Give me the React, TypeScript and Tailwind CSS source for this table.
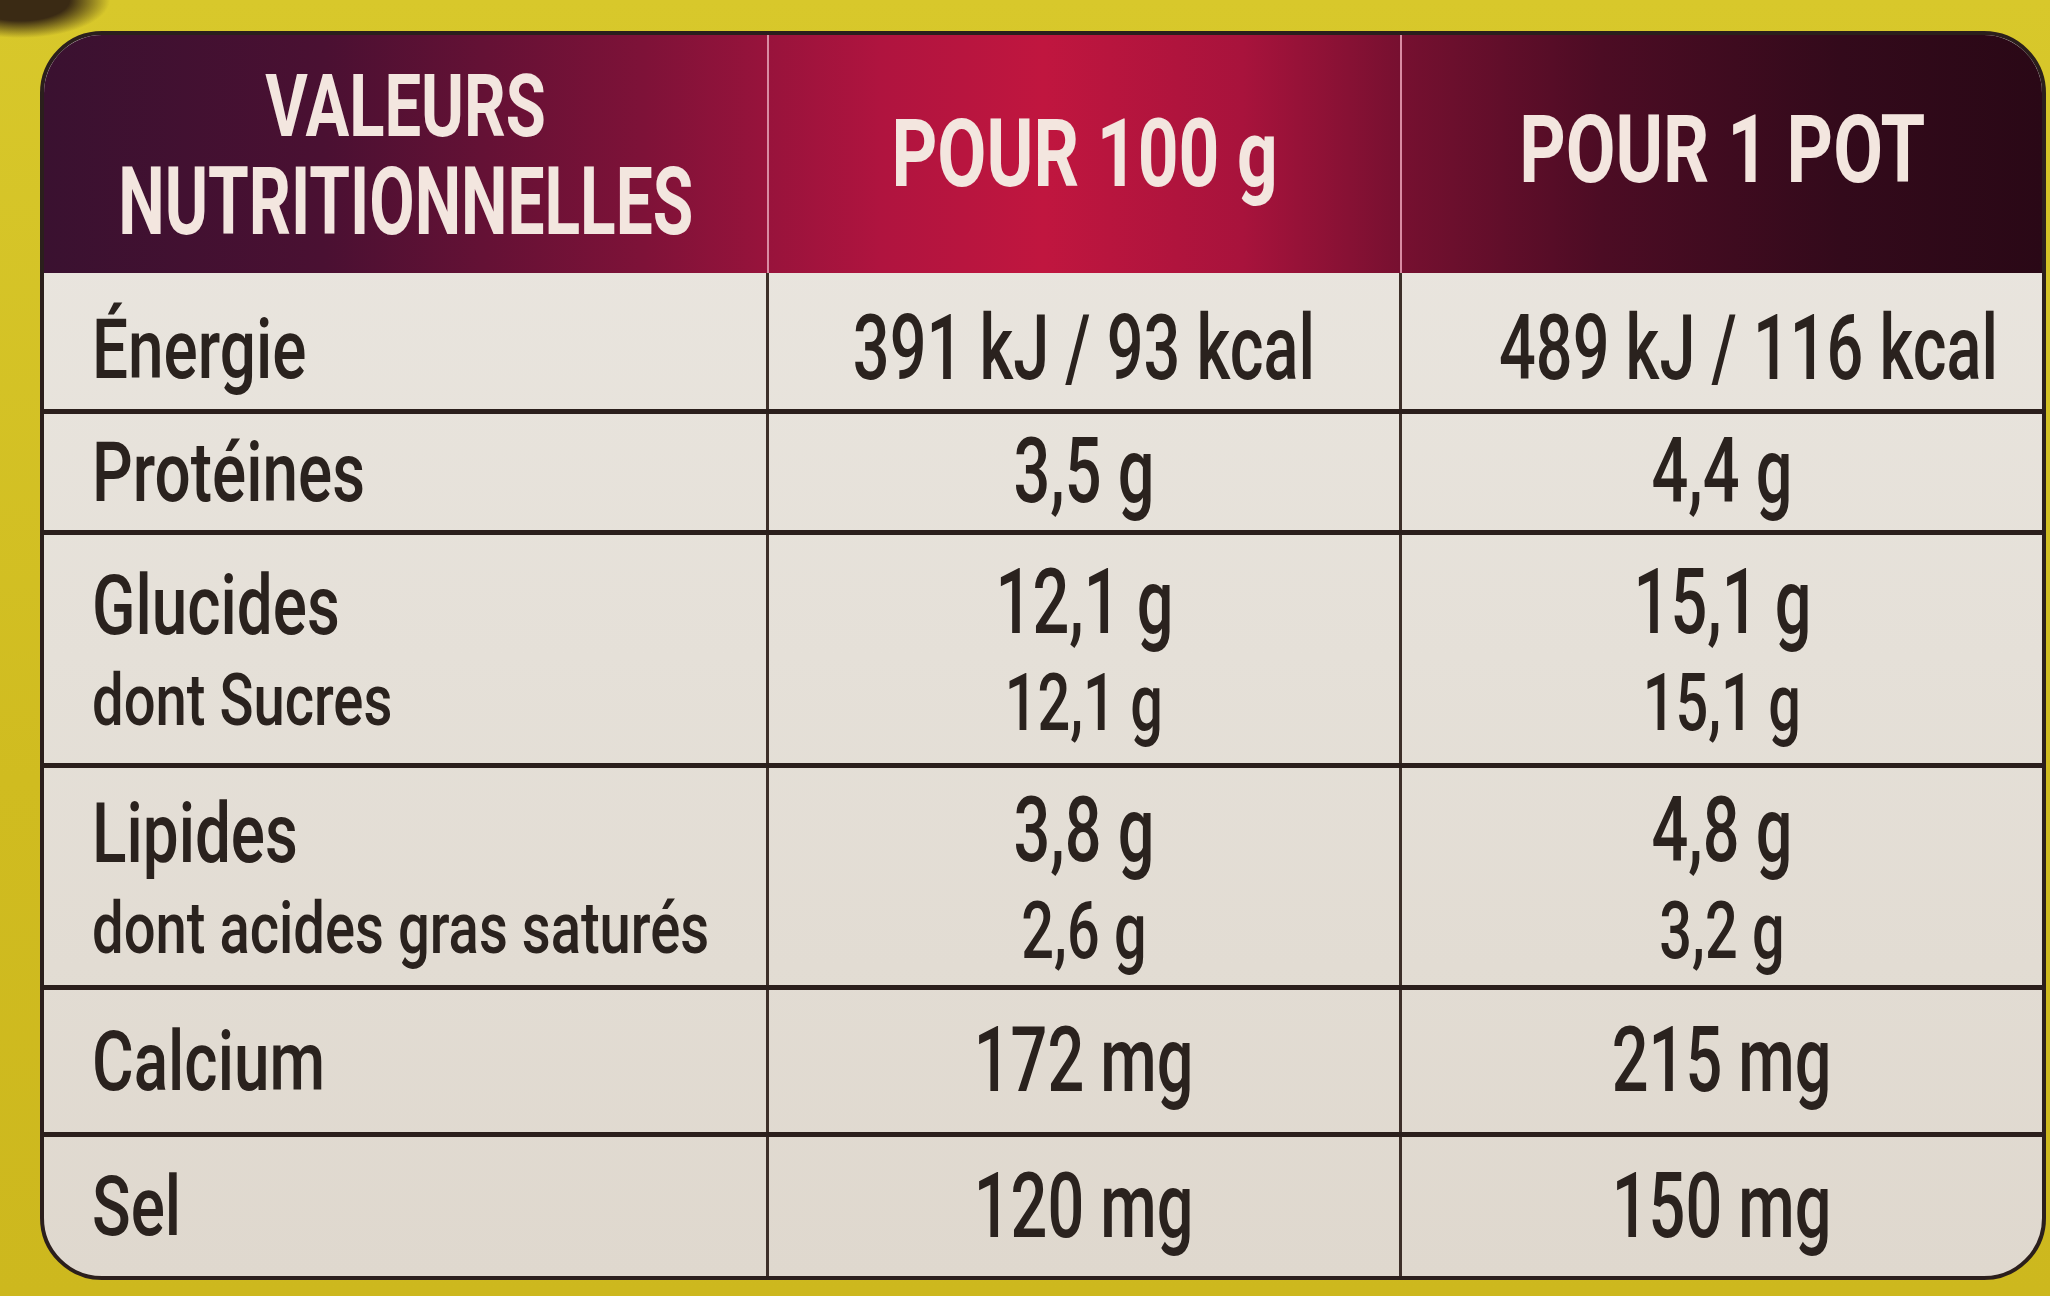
import React from "react";

type Row = {
  label: string[];
  per100: string[];
  perPot: string[];
  height: string;
  shift?: string;
};

const rows: Row[] = [
  { label: ["Énergie"], per100: ["391 kJ / 93 kcal"], perPot: ["489 kJ / 116 kcal"], height: "h-[141px]", shift: "pt-[16px]" },
  { label: ["Protéines"], per100: ["3,5 g"], perPot: ["4,4 g"], height: "h-[121px]" },
  { label: ["Glucides", "dont Sucres"], per100: ["12,1 g", "12,1 g"], perPot: ["15,1 g", "15,1 g"], height: "h-[233px]", shift: "pt-[8px]" },
  { label: ["Lipides", "dont acides gras saturés"], per100: ["3,8 g", "2,6 g"], perPot: ["4,8 g", "3,2 g"], height: "h-[222px]", shift: "pt-[8px]" },
  { label: ["Calcium"], per100: ["172 mg"], perPot: ["215 mg"], height: "h-[147px]" },
  { label: ["Sel"], per100: ["120 mg"], perPot: ["150 mg"], height: "h-[139px]" },
];

function Label({ lines }: { lines: string[] }) {
  return (
    <>
      {lines.map((t, i) => (
        <span
          key={t}
          className={
            i === 0
              ? "block origin-left scale-x-[0.76] whitespace-nowrap text-[84px] leading-[95px]"
              : "block origin-left scale-x-[0.78] whitespace-nowrap text-[72px] leading-[95px]"
          }
        >
          {t}
        </span>
      ))}
    </>
  );
}

function Values({ lines }: { lines: string[] }) {
  return (
    <>
      {lines.map((t, i) => (
        <span
          key={i}
          className={
            i === 0
              ? "inline-block scale-x-[0.72] whitespace-nowrap text-[90px] leading-[100px]"
              : "inline-block scale-x-[0.72] whitespace-nowrap text-[80px] leading-[100px]"
          }
        >
          {t}
        </span>
      ))}
    </>
  );
}

export default function App() {
  return (
    <div className="w-[2050px] h-[1296px] overflow-hidden pt-[31px] pl-[40px] bg-[radial-gradient(ellipse_90px_38px_at_20px_0px,#3a2a14_55%,transparent_100%),linear-gradient(180deg,#d8c82b_0%,#d0bc20_60%,#cdb81e_100%)] font-['Roboto','Liberation_Sans',sans-serif]">
      <div className="w-[2006px] h-[1249px] rounded-[62px] border-4 border-[#2b1f1c] overflow-hidden bg-[linear-gradient(180deg,#ebe7e1_0%,#e5e0d8_50%,#dfd8ce_100%)] text-[#2a221e] font-medium">
        {/* header */}
        <div className="grid grid-cols-[725px_633px_1fr] h-[238px] text-[#f3e6df] font-bold bg-[linear-gradient(90deg,#3a1130_0%,#4a1032_14%,#7e1238_30%,#b0143f_42%,#c0163f_50%,#a8133c_60%,#761030_68%,#4c0c24_78%,#330a1b_90%,#2a0816_100%)]">
          <div className="flex flex-col items-center justify-center border-r-2 border-[#d98ca3]">
            <span className="inline-block scale-x-[0.74] whitespace-nowrap text-[88px] leading-[97px]">VALEURS</span>
            <span className="inline-block scale-x-[0.7] whitespace-nowrap text-[94px] leading-[97px]">NUTRITIONNELLES</span>
          </div>
          <div className="flex items-center justify-center border-r-2 border-[#d98ca3]">
            <span className="inline-block scale-x-[0.75] whitespace-nowrap text-[95px] leading-[100px]">POUR 100 g</span>
          </div>
          <div className="flex items-center justify-center pb-[8px]">
            <span className="inline-block scale-x-[0.76] whitespace-nowrap text-[95px] leading-[100px]">POUR 1 POT</span>
          </div>
        </div>

        {/* body */}
        {rows.map((r, idx) => (
          <div
            key={r.label[0]}
            className={`grid grid-cols-[725px_633px_1fr] ${r.height} ${idx < rows.length - 1 ? "border-b-[5px] border-[#2b1f1c]" : ""}`}
          >
            <div className={`flex flex-col justify-center pl-[48px] border-r-[3px] border-[#3d2f29] ${r.shift ?? ""}`}>
              <Label lines={r.label} />
            </div>
            <div className={`flex flex-col items-center justify-center border-r-[3px] border-[#3d2f29] ${r.shift ?? ""}`}>
              <Values lines={r.per100} />
            </div>
            <div className={`flex flex-col items-center justify-center ${r.shift ?? ""}`}>
              <Values lines={r.perPot} />
            </div>
          </div>
        ))}
      </div>
    </div>
  );
}
